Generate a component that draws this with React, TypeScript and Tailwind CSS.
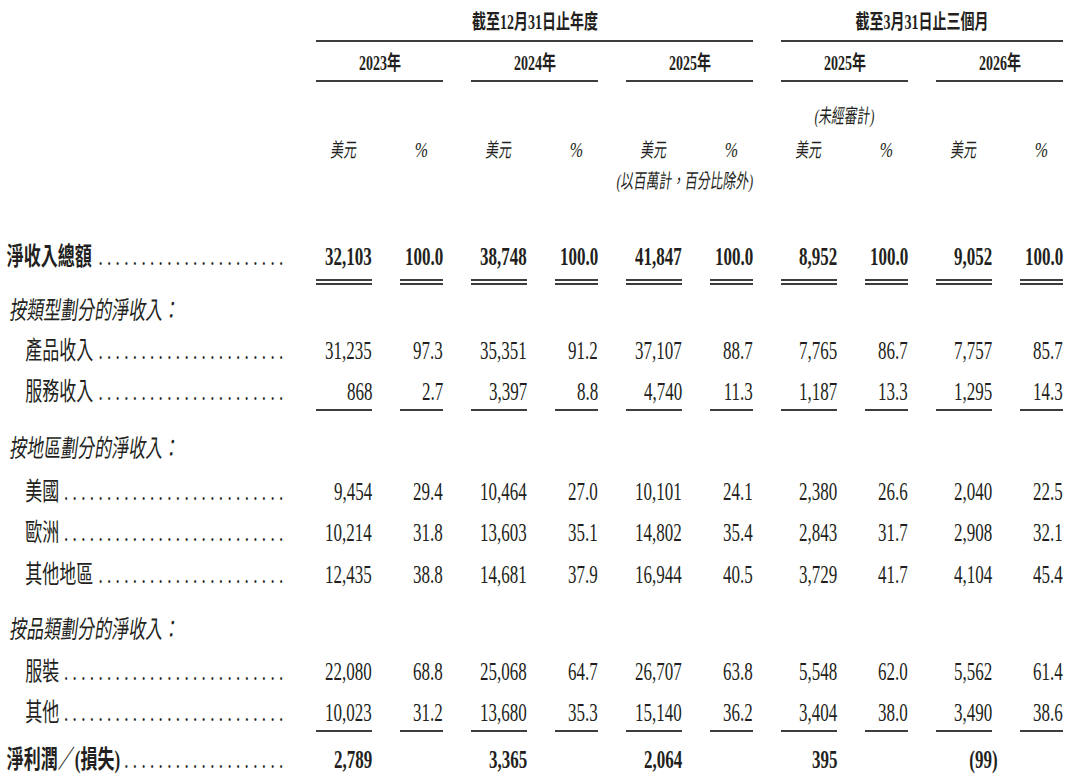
const cols =
  "grid grid-cols-[288px_56px_43px_56px_43px_56px_43px_56px_43px_56px_43px] gap-x-[28px]";
const sx = "inline-block whitespace-nowrap scale-x-[0.68]";
const hx = "inline-block whitespace-nowrap scale-x-[0.7]";
const ix = "inline-block whitespace-nowrap scale-x-[0.64] -skew-x-[11deg]";
const rule = "h-[1.5px] bg-[#3d3d3d]";

type Line = "single" | "double" | undefined;

interface DataRow {
  label: string;
  kind: "total" | "section" | "item" | "net";
  indent?: boolean;
  dots?: number;
  values?: string[];
  h: string;
  line?: Line;
}

const rows: DataRow[] = [
  {
    label: "淨收入總額",
    kind: "total",
    dots: 22,
    h: "h-[54px]",
    line: "double",
    values: ["32,103", "100.0", "38,748", "100.0", "41,847", "100.0", "8,952", "100.0", "9,052", "100.0"],
  },
  { label: "按類型劃分的淨收入：", kind: "section", h: "h-[40px]" },
  {
    label: "產品收入",
    kind: "item",
    indent: true,
    dots: 22,
    h: "h-[41px]",
    values: ["31,235", "97.3", "35,351", "91.2", "37,107", "88.7", "7,765", "86.7", "7,757", "85.7"],
  },
  {
    label: "服務收入",
    kind: "item",
    indent: true,
    dots: 22,
    h: "h-[57px]",
    line: "single",
    values: ["868", "2.7", "3,397", "8.8", "4,740", "11.3", "1,187", "13.3", "1,295", "14.3"],
  },
  { label: "按地區劃分的淨收入：", kind: "section", h: "h-[43px]" },
  {
    label: "美國",
    kind: "item",
    indent: true,
    dots: 26,
    h: "h-[41px]",
    values: ["9,454", "29.4", "10,464", "27.0", "10,101", "24.1", "2,380", "26.6", "2,040", "22.5"],
  },
  {
    label: "歐洲",
    kind: "item",
    indent: true,
    dots: 26,
    h: "h-[42px]",
    values: ["10,214", "31.8", "13,603", "35.1", "14,802", "35.4", "2,843", "31.7", "2,908", "32.1"],
  },
  {
    label: "其他地區",
    kind: "item",
    indent: true,
    dots: 22,
    h: "h-[55px]",
    values: ["12,435", "38.8", "14,681", "37.9", "16,944", "40.5", "3,729", "41.7", "4,104", "45.4"],
  },
  { label: "按品類劃分的淨收入：", kind: "section", h: "h-[42px]" },
  {
    label: "服裝",
    kind: "item",
    indent: true,
    dots: 26,
    h: "h-[41px]",
    values: ["22,080", "68.8", "25,068", "64.7", "26,707", "63.8", "5,548", "62.0", "5,562", "61.4"],
  },
  {
    label: "其他",
    kind: "item",
    indent: true,
    dots: 26,
    h: "h-[47px]",
    line: "single",
    values: ["10,023", "31.2", "13,680", "35.3", "15,140", "36.2", "3,404", "38.0", "3,490", "38.6"],
  },
  {
    label: "淨利潤／(損失)",
    kind: "net",
    dots: 19,
    h: "h-[35px]",
    values: ["2,789", "", "3,365", "", "2,064", "", "395", "", "(99)", ""],
  },
];

function Cell({ value, line, bold }: { value: string; line: Line; bold: boolean }) {
  const hang = value.endsWith(")") ? "mr-[-6px]" : "";
  return (
    <div className="flex flex-col">
      <div className={`flex h-[24px] justify-end leading-[24px] ${bold ? "font-bold" : ""}`}>
        <span className={`${sx} origin-right ${hang}`}>{value}</span>
      </div>
      {line === "single" && <div className={`mt-[5px] ${rule}`} />}
      {line === "double" && (
        <>
          <div className={`mt-[10px] ${rule}`} />
          <div className={`mt-[2.5px] ${rule}`} />
        </>
      )}
    </div>
  );
}

function Label({ row }: { row: DataRow }) {
  const bold = row.kind === "total" || row.kind === "net";
  const section = row.kind === "section";
  return (
    <div className="h-[24px] leading-[24px]">
      <div
        className={`flex w-[423px] origin-left scale-x-[0.68] ${row.indent ? "pl-[37px]" : "pl-[10px]"}`}
      >
        <span
          className={`inline-block whitespace-nowrap ${bold ? "font-bold" : ""} ${
            section ? "origin-bottom-left -skew-x-[11deg] pl-[3px]" : ""
          }`}
        >
          {row.label}
        </span>
        {row.dots && (
          <span className="ml-auto whitespace-nowrap font-normal tracking-[6.4px]">
            {".".repeat(row.dots)}
          </span>
        )}
      </div>
    </div>
  );
}

function Center({ children, look }: { children: React.ReactNode; look: string }) {
  return (
    <div className="flex h-[24px] justify-center leading-[24px]">
      <span className={`${look} origin-center`}>{children}</span>
    </div>
  );
}

export default function App() {
  const years = ["2023年", "2024年", "2025年", "2025年", "2026年"];
  return (
    <div className="h-[783px] w-[1080px] overflow-hidden bg-white pt-[10px] font-['Liberation_Serif','Noto_Sans_CJK_TC',serif] text-[25px] text-[#231f20]">
      {/* period headers */}
      <div className={`${cols} h-[41px] text-[20px] font-bold`}>
        <div className="col-span-6 col-start-2 flex flex-col">
          <Center look={hx}>截至12月31日止年度</Center>
          <div className={`mt-[6px] ${rule}`} />
        </div>
        <div className="col-span-4 col-start-8 flex flex-col">
          <Center look={hx}>截至3月31日止三個月</Center>
          <div className={`mt-[6px] ${rule}`} />
        </div>
      </div>

      <div className={`${cols} h-[53px] text-[20px] font-bold`}>
        {years.map((y, i) => (
          <div key={i} className={`col-span-2 flex flex-col ${i === 0 ? "col-start-2" : ""}`}>
            <Center look={hx}>{y}</Center>
            <div className={`mt-[5px] ${rule}`} />
          </div>
        ))}
      </div>

      <div className={`${cols} h-[34px] text-[20px]`}>
        <div className="col-span-2 col-start-8">
          <Center look={ix}>(未經審計)</Center>
        </div>
      </div>

      <div className={`${cols} h-[31px] text-[20px]`}>
        <div />
        {years.map((y, i) => (
          <div key={i} className="contents">
            <Center look={ix}>美元</Center>
            <Center look="inline-block italic scale-x-[0.8]">%</Center>
          </div>
        ))}
      </div>

      <div className={`${cols} h-[76px] text-[20px]`}>
        <div className="col-span-3 col-start-5 flex h-[24px] justify-end leading-[24px]">
          <span className={`${ix} origin-right`}>(以百萬計，百分比除外)</span>
        </div>
      </div>

      {/* body */}
      {rows.map((row, r) => (
        <div key={r} className={`${cols} ${row.h}`}>
          <Label row={row} />
          {row.values?.map((v, i) => (
            <Cell
              key={i}
              value={v}
              line={row.line}
              bold={row.kind === "total" || row.kind === "net"}
            />
          ))}
        </div>
      ))}
    </div>
  );
}
